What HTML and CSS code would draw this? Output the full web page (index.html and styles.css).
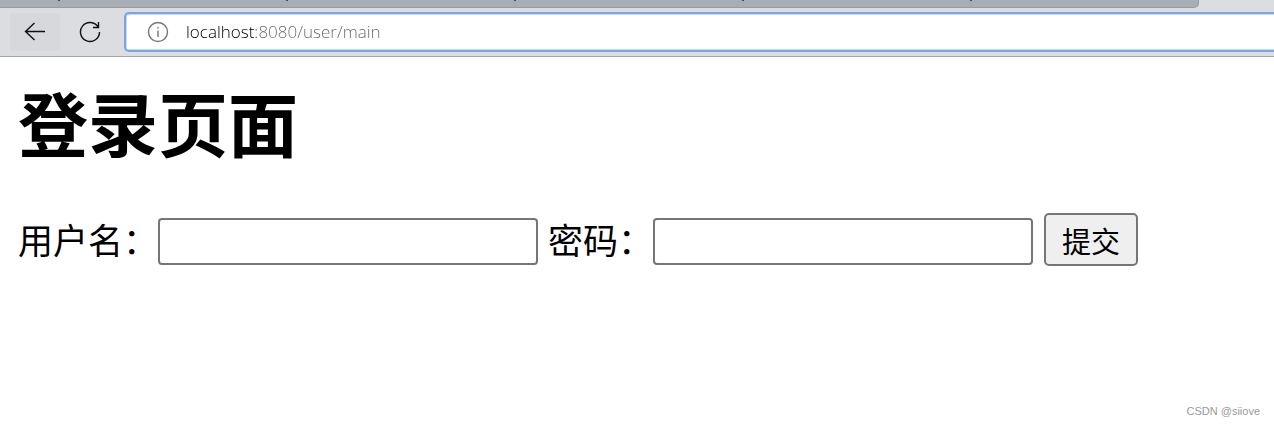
FILE: index.html
```html
<!DOCTYPE html>
<html lang="zh-CN">
<head>
  <meta charset="UTF-8">
  <meta name="viewport" content="width=device-width, initial-scale=1.0">
  <title>登录页面</title>
  <link rel="stylesheet" href="styles.css">
</head>
<body>
  <header class="browser">
    <div class="tabs">
      <div class="tab-group">
        <span class="tab"></span>
        <span class="tab"></span>
        <span class="tab"></span>
        <span class="tab"></span>
        <span class="tab"></span>
      </div>
    </div>
    <div class="toolbar">
      <button class="tool back" type="button" aria-label="返回">
        <svg width="22" height="22" viewBox="0 0 22 22"><path d="M21 10.5H1.5M10.5 2L1.5 10.5L10.5 19"/></svg>
      </button>
      <button class="tool" type="button" aria-label="刷新">
        <svg width="22" height="22" viewBox="0 0 22 22"><path d="M19.2 6.2A9.5 9.5 0 1 0 20.5 11M19.5 1V6.5H14"/></svg>
      </button>
      <div class="address">
        <svg class="info" width="22" height="22" viewBox="0 0 22 22"><circle cx="11" cy="11" r="9.5"/><path d="M11 9.5V16M11 6V7.5"/></svg>
        <input class="url" type="text" aria-label="地址" value="localhost:8080/user/main">
      </div>
    </div>
  </header>

  <main class="page">
    <h1>登录页面</h1>
    <form class="login">
      <label for="username">用户名：</label>
      <input class="field" id="username" name="username" type="text">
      <label class="next" for="password">密码：</label>
      <input class="field" id="password" name="password" type="password">
      <button class="submit" type="submit">提交</button>
    </form>
  </main>
  <div class="watermark">CSDN @siiove</div>
</body>
</html>
```
FILE: styles.css
```css
* {
  box-sizing: border-box;
}
body {
  margin: 0;
  min-height: 100vh;
  position: relative;
  background: #fff;
  color: #000;
  font-family: "Noto Sans CJK SC", sans-serif;
}

/* browser bar */
.browser {
  background: #dcdde1;
  border-bottom: 1px solid #a5a6a9;
}
.tabs {
  height: 8px;
  padding-right: 75px;
}
.tab-group {
  display: flex;
  height: 8px;
  background: #a9aeb6;
  border-right: 1px solid #989c9f;
  border-bottom: 1px solid #989c9f;
  border-bottom-right-radius: 5px;
}
.tab {
  width: 228px;
  height: 1px;
  padding-left: 58px;
}
.tab::before {
  content: "";
  display: block;
  width: 2px;
  height: 1px;
  background: #4a4c50;
}
.toolbar {
  display: flex;
  align-items: center;
  height: 48px;
  padding-left: 10px;
}
.tool {
  display: flex;
  align-items: center;
  justify-content: center;
  width: 50px;
  height: 38px;
  margin-right: 5px;
  padding: 0;
  border: 0;
  border-radius: 3px;
  background: transparent;
}
.tool svg,
.info {
  fill: none;
  stroke: #111;
  stroke-width: 1.4;
}
.back {
  background: #d7d8dc;
}
.address {
  flex: 1;
  display: flex;
  align-items: center;
  height: 40px;
  margin-left: 4px;
  padding-left: 21px;
  background: #fff;
  border: 2px solid #7fa4e0;
  border-right: 0;
  border-radius: 5px 0 0 5px;
  box-shadow: inset 1px 1px #c3d7f7, inset 0 -1px #c3d7f7;
}
.info {
  flex: none;
  margin-right: 17px;
  stroke: #767676;
}
.url {
  flex: 1;
  height: 30px;
  margin-bottom: 2px;
  padding: 0;
  border: 0;
  outline: 0;
  font: 300 17px "Open Sans", sans-serif;
  color: transparent;
  /* host in black, the rest in grey */
  background: linear-gradient(to right, #000 70px, #666 70px);
  -webkit-background-clip: text;
  background-clip: text;
}

/* login page */
.page {
  padding: 16px 17px 16px 18px;
}
h1 {
  margin: 0 0 42px;
  font-size: 70px;
  line-height: 98px;
}
.login {
  display: flex;
  align-items: flex-end;
  font-size: 35px;
  line-height: 51px;
}
.login label {
  flex: none;
  padding-bottom: 2px;
}
.login .next {
  margin-left: 10px;
}
.field {
  width: 380px;
  height: 47px;
  margin-bottom: 1px;
  padding: 2px 6px;
  border: 2px solid #767676;
  border-radius: 4px;
  font-size: 29px;
}
.submit {
  width: 94px;
  height: 53px;
  margin-left: 11px;
  padding: 0;
  border: 2px solid #767676;
  border-radius: 5px;
  background: #efefef;
  color: #000;
  font-family: inherit;
  font-size: 29px;
}
.watermark {
  position: absolute;
  right: 14px;
  bottom: 6px;
  color: #999;
  font: 11px/16px "Liberation Sans", sans-serif;
}
```
